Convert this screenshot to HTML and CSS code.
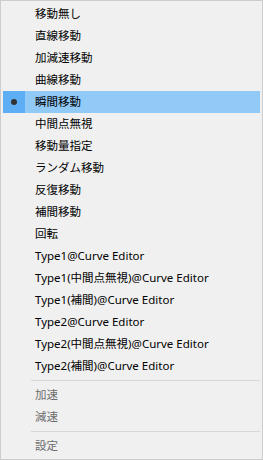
FILE: index.html
```html
<!DOCTYPE html>
<html lang="ja">
<head>
<meta charset="utf-8">
<link rel="stylesheet" href="styles.css">
</head>
<body>
<div class="menu">
  <div class="item"><span class="check"></span><span class="label">移動無し</span></div>
  <div class="item"><span class="check"></span><span class="label">直線移動</span></div>
  <div class="item"><span class="check"></span><span class="label">加減速移動</span></div>
  <div class="item"><span class="check"></span><span class="label">曲線移動</span></div>
  <div class="item selected"><span class="check"><span class="dot"></span></span><span class="label">瞬間移動</span></div>
  <div class="item"><span class="check"></span><span class="label">中間点無視</span></div>
  <div class="item"><span class="check"></span><span class="label">移動量指定</span></div>
  <div class="item"><span class="check"></span><span class="label">ランダム移動</span></div>
  <div class="item"><span class="check"></span><span class="label">反復移動</span></div>
  <div class="item"><span class="check"></span><span class="label">補間移動</span></div>
  <div class="item"><span class="check"></span><span class="label">回転</span></div>
  <div class="item"><span class="check"></span><span class="label">Type1@Curve Editor</span></div>
  <div class="item"><span class="check"></span><span class="label">Type1(中間点無視)@Curve Editor</span></div>
  <div class="item"><span class="check"></span><span class="label">Type1(補間)@Curve Editor</span></div>
  <div class="item"><span class="check"></span><span class="label">Type2@Curve Editor</span></div>
  <div class="item"><span class="check"></span><span class="label">Type2(中間点無視)@Curve Editor</span></div>
  <div class="item"><span class="check"></span><span class="label">Type2(補間)@Curve Editor</span></div>
  <div class="sep"></div>
  <div class="item disabled"><span class="check"></span><span class="label">加速</span></div>
  <div class="item disabled"><span class="check"></span><span class="label">減速</span></div>
  <div class="sep"></div>
  <div class="item disabled"><span class="check"></span><span class="label">設定</span></div>
</div>
</body>
</html>
```
FILE: styles.css
```css
html, body {
  margin: 0;
  padding: 0;
  background: #f0f0f0;
}
.menu {
  box-sizing: border-box;
  width: 263px;
  height: 460px;
  border: 1px solid #cccccc;
  background: #f0f0f0;
  padding: 2px 2px;
  font-family: "Noto Sans", "Noto Sans CJK JP", sans-serif;
  font-size: 11.5px;
  color: #000;
  display: flex;
  flex-direction: column;
}
.item {
  height: 22px;
  display: flex;
  align-items: center;
  width: 257px;
  flex: none;
}
.check {
  width: 22px;
  height: 22px;
  flex: none;
  display: flex;
  align-items: center;
  justify-content: center;
}
.label {
  padding-left: 10px;
  white-space: nowrap;
  line-height: 22px;
}
.selected {
  background: #91c9f7;
}
.selected .check {
  background: #5eaef6;
}
.dot {
  width: 6px;
  height: 6px;
  border-radius: 50%;
  background: #333;
}
.disabled {
  color: #6d6d6d;
}
.sep {
  height: 7px;
  flex: none;
  display: flex;
  align-items: center;
  padding-left: 28px;
}
.sep::before {
  content: "";
  display: block;
  height: 1px;
  width: 229px;
  background: #d7d7d7;
}
```
